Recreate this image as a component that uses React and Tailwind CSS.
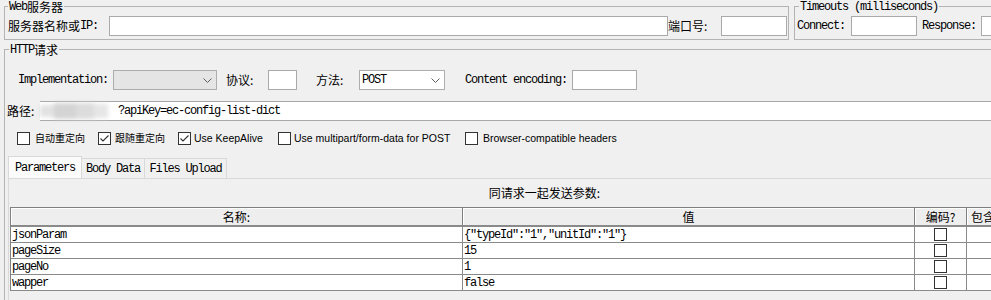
import React from 'react';

const mono = "font-['Liberation_Mono',monospace] text-[12px] tracking-[-1.2px] text-[#000]";
const cjk = "font-['Noto_Sans_CJK_SC',sans-serif] text-[12px] text-[#000]";
const cjkSmall = "font-['Noto_Sans_CJK_SC',sans-serif] text-[10px] text-[#000]";
const ui = "font-['Liberation_Sans','Noto_Sans_CJK_SC',sans-serif] text-[10.5px] text-[#000]";

function Chevron() {
  return (
    <svg width="9" height="5" viewBox="0 0 9 5" className="shrink-0">
      <polyline points="0.5,0.5 4.5,4.5 8.5,0.5" fill="none" stroke="#606060" strokeWidth="1" />
    </svg>
  );
}

function Box({ checked }) {
  return (
    <span className="w-[13px] h-[13px] border border-[#333] bg-white flex items-center justify-center shrink-0">
      {checked && (
        <svg width="9" height="7" viewBox="0 0 9 7">
          <polyline points="0.5,3.5 3,6 8.5,0.5" fill="none" stroke="#333" strokeWidth="1.1" />
        </svg>
      )}
    </span>
  );
}

const rows = [
  { name: 'jsonParam', value: '{"typeId":"1","unitId":"1"}' },
  { name: 'pageSize', value: '15' },
  { name: 'pageNo', value: '1' },
  { name: 'wapper', value: 'false' },
];

export default function App() {
  return (
    <div className="w-[991px] h-[300px] overflow-hidden bg-[#f0f0f0] leading-none">
      {/* Web server + timeouts */}
      <div className="flex pl-[4px]">
        <fieldset className="w-[785px] shrink-0 border border-[#b4b4b4] pl-[3px] pr-[1px] pt-[4px] pb-[3px]">
          <legend className="h-[12px] flex items-center px-[1px] whitespace-nowrap">
            <span className="flex items-center translate-y-[1px]">
              <span className={mono}>Web</span>
              <span className={cjk}>服务器</span>
            </span>
          </legend>
          <div className="flex items-center h-[20px]">
            <div className="w-[101px] shrink-0 flex items-center">
              <span className={cjk}>服务器名称或</span>
              <span className={mono}>IP:</span>
            </div>
            <div className="flex-1 h-[20px] bg-white border border-[#a9a9a9]" />
            <div className={`w-[53px] shrink-0 ${cjk}`}>端口号:</div>
            <div className="w-[66px] shrink-0 h-[20px] bg-white border border-[#a9a9a9]" />
          </div>
        </fieldset>

        <fieldset className="ml-[5px] w-[300px] shrink-0 border border-[#b4b4b4] pl-[2px] pt-[4px] pb-[3px]">
          <legend className="ml-[2px] h-[12px] flex items-center px-[1px] whitespace-nowrap">
            <span className={`translate-y-[1px] ${mono}`}>Timeouts (milliseconds)</span>
          </legend>
          <div className="flex items-center h-[20px]">
            <div className={`w-[54px] shrink-0 ${mono}`}>Connect:</div>
            <div className="w-[66px] shrink-0 h-[20px] bg-white border border-[#a9a9a9]" />
            <div className={`ml-[5px] w-[59px] shrink-0 ${mono}`}>Response:</div>
            <div className="w-[66px] shrink-0 h-[20px] bg-white border border-[#a9a9a9]" />
          </div>
        </fieldset>
      </div>

      {/* HTTP request */}
      <fieldset className="mt-[3px] ml-[4px] w-[1046px] border border-[#b4b4b4] pb-[10px]">
        <legend className="ml-[4px] h-[12px] flex items-center px-[1px] whitespace-nowrap">
          <span className="flex items-center translate-y-[1px]">
            <span className={mono}>HTTP</span>
            <span className={cjk}>请求</span>
          </span>
        </legend>

        {/* Implementation row */}
        <div className="flex items-center h-[20px] mt-[15px] pl-[13px]">
          <div className={`w-[95px] shrink-0 ${mono}`}>Implementation:</div>
          <div className="w-[104px] h-[20px] shrink-0 bg-[#e5e5e5] border border-[#adadad] flex items-center justify-end pr-[4px]">
            <Chevron />
          </div>
          <div className={`ml-[9px] w-[42px] shrink-0 ${cjk}`}>协议:</div>
          <div className="w-[29px] h-[20px] shrink-0 bg-white border border-[#a9a9a9]" />
          <div className={`ml-[19px] w-[43px] shrink-0 ${cjk}`}>方法:</div>
          <div className="w-[86px] h-[20px] shrink-0 bg-white border border-[#adadad] flex items-center justify-between pl-[2px] pr-[4px]">
            <span className={mono}>POST</span>
            <Chevron />
          </div>
          <div className={`ml-[20px] w-[107px] shrink-0 ${mono}`}>Content encoding:</div>
          <div className="w-[65px] h-[20px] shrink-0 bg-white border border-[#a9a9a9]" />
        </div>

        {/* Path row */}
        <div className="flex items-center h-[20px] mt-[11px] pl-[2px]">
          <div className={`w-[33px] shrink-0 ${cjk}`}>路径:</div>
          <div className="flex-1 h-[20px] bg-white border-y border-[#a9a9a9] flex items-center">
            <span className="flex h-[18px] w-[78px] shrink-0 items-center blur-[2px]">
              <span className="h-[12px] w-[14px] bg-[#e2e2e2]" />
              <span className="h-[16px] w-[22px] bg-[#d4d4d4]" />
              <span className="h-[16px] w-[18px] bg-[#dcdcdc]" />
              <span className="h-[14px] w-[14px] bg-[#e6e6e6]" />
            </span>
            <span className={mono}>?apiKey=ec-config-list-dict</span>
          </div>
        </div>

        {/* Options row */}
        <div className="flex items-center h-[14px] mt-[10px] pl-[12px]">
          <div className="w-[81px] shrink-0 flex items-center gap-[5px]">
            <Box />
            <span className={cjkSmall}>自动重定向</span>
          </div>
          <div className="w-[80px] shrink-0 flex items-center gap-[4px]">
            <Box checked />
            <span className={cjkSmall}>跟随重定向</span>
          </div>
          <div className="w-[100px] shrink-0 flex items-center gap-[3px]">
            <Box checked />
            <span className={ui}>Use KeepAlive</span>
          </div>
          <div className="w-[187px] shrink-0 flex items-center gap-[3px]">
            <Box />
            <span className={ui}>Use multipart/form-data for POST</span>
          </div>
          <div className="flex items-center gap-[5px]">
            <Box />
            <span className={ui}>Browser-compatible headers</span>
          </div>
        </div>

        {/* Tabs */}
        <div className="flex items-end h-[22px] mt-[11px] pl-[3px]">
          <div className={`w-[74px] h-[22px] bg-[#fbfbfb] border border-b-0 border-[#d9d9d9] flex items-center justify-center ${mono}`}>
            Parameters
          </div>
          <div className={`w-[64px] h-[20px] -ml-px bg-[#f0f0f0] border border-b-0 border-[#d9d9d9] flex items-center justify-center ${mono}`}>
            Body Data
          </div>
          <div className={`w-[83px] h-[20px] -ml-px bg-[#f0f0f0] border border-b-0 border-[#d9d9d9] flex items-center justify-center ${mono}`}>
            Files Upload
          </div>
        </div>

        {/* Tab panel */}
        <div className="ml-[3px] border-t border-l border-[#d9d9d9] bg-[#f0f0f0]">
          <div className={`h-[28px] flex items-center justify-center pr-[10px] ${cjk}`}>同请求一起发送参数:</div>
          <div className="ml-px border-l border-t border-[#808080] w-[1080px]">
            <div className="grid grid-cols-[452px_452px_52px_124px] h-[19px] border-b-2 border-[#8a8a8a]">
              <div className={`bg-[#eeeeee] border-r border-[#808080] shadow-[inset_1px_1px_0_#fff] flex items-center justify-center ${cjk}`}>名称:</div>
              <div className={`bg-[#eeeeee] border-r border-[#808080] shadow-[inset_1px_1px_0_#fff] flex items-center justify-center ${cjk}`}>值</div>
              <div className={`bg-[#eeeeee] border-r border-[#808080] shadow-[inset_1px_1px_0_#fff] flex items-center justify-center ${cjk}`}>编码?</div>
              <div className={`bg-[#eeeeee] border-r border-[#808080] shadow-[inset_1px_1px_0_#fff] flex items-center pl-[4px] ${cjk}`}>包含</div>
            </div>
            {rows.map((r) => (
              <div key={r.name} className="grid grid-cols-[452px_452px_52px_124px] h-[16px] border-b border-[#8a8a8a] bg-white">
                <div className={`border-r border-[#8a8a8a] flex items-center pl-[1px] ${mono}`}>{r.name}</div>
                <div className={`border-r border-[#8a8a8a] flex items-center pl-[1px] ${mono}`}>{r.value}</div>
                <div className="border-r border-[#8a8a8a] flex items-center justify-center">
                  <span className="w-[13px] h-[13px] border border-[#333] bg-white" />
                </div>
                <div className="border-r border-[#8a8a8a]" />
              </div>
            ))}
          </div>
          <div className="h-[20px]" />
        </div>
      </fieldset>
    </div>
  );
}
